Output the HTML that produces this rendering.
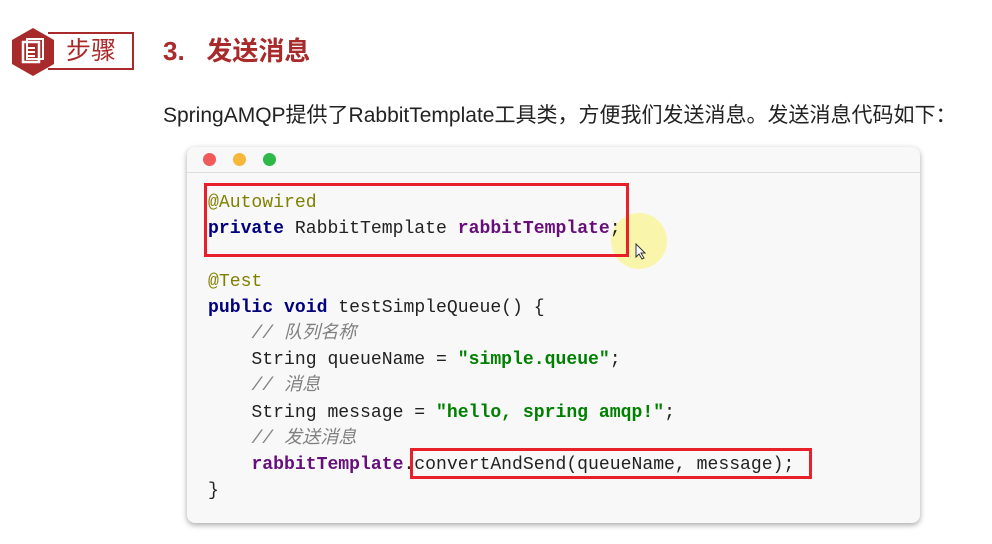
<!DOCTYPE html>
<html><head><meta charset="utf-8"><style>
*{margin:0;padding:0;box-sizing:border-box}
body{width:992px;height:544px;background:#fff;position:relative;overflow:hidden;font-family:"Liberation Sans","Noto Sans CJK SC",sans-serif}
.abs{position:absolute}
.code{font-family:"Liberation Mono","Noto Sans CJK SC",monospace;font-size:18.1px;line-height:26.2px;color:#222;white-space:pre}
.k{color:#000080;font-weight:bold}
.f{color:#660e7a;font-weight:bold}
.a{color:#808000}
.s{color:#008000;font-weight:bold}
.c{color:#808080;font-style:italic}
</style></head><body>
<svg class="abs" style="left:10px;top:27px" width="46" height="50" viewBox="0 0 46 50">
<polygon points="23,1 44,13 44,37 23,49 2,37 2,13" fill="#a82a2a"/>
<rect x="13" y="15" width="16" height="20" fill="none" stroke="#fff" stroke-width="2.5"/>
<rect x="17" y="12" width="16" height="20" fill="none" stroke="#fff" stroke-width="2"/>
<line x1="17" y1="21" x2="25" y2="21" stroke="#fff" stroke-width="2"/>
<line x1="17" y1="25" x2="25" y2="25" stroke="#fff" stroke-width="2"/>
<line x1="17" y1="29" x2="25" y2="29" stroke="#fff" stroke-width="2"/>
</svg>
<div class="abs" style="left:48px;top:32px;width:86px;height:38px;border:2px solid #a82a2a;border-left:none"></div>
<div class="abs" style="left:66px;top:35px;font-size:25px;color:#a82a2a;line-height:32px">步骤</div>
<div class="abs" style="left:163px;top:35px;font-size:26px;color:#a82a2a;font-weight:bold;line-height:32px">3.&nbsp;&nbsp;&nbsp;发送消息</div>
<div class="abs" style="left:163px;top:102px;font-size:21px;color:#222;line-height:28px">SpringAMQP提供了RabbitTemplate工具类，方便我们发送消息。发送消息代码如下：</div>
<div class="abs" style="left:187px;top:147px;width:733px;height:376px;background:#f8f8f8;border-radius:8px;box-shadow:0 2px 6px rgba(0,0,0,.35)">
<div style="height:26px;border-bottom:1px solid #ddd;position:relative">
<span class="abs" style="left:16px;top:6px;width:13px;height:13px;border-radius:50%;background:#ee5b5a"></span>
<span class="abs" style="left:46px;top:6px;width:13px;height:13px;border-radius:50%;background:#f6b73b"></span>
<span class="abs" style="left:76px;top:6px;width:13px;height:13px;border-radius:50%;background:#2cb947"></span>
</div>
</div>
<div class="abs" style="left:611px;top:213px;width:56px;height:56px;border-radius:50%;background:rgba(250,245,120,.6)"></div>
<div class="abs code" style="left:208px;top:190px"><span class="a">@Autowired</span>
<span class="k">private</span> RabbitTemplate <span class="f">rabbitTemplate</span>;

<span class="a">@Test</span>
<span class="k">public void</span> testSimpleQueue() {
    <span class="c">// 队列名称</span>
    String queueName = <span class="s">"simple.queue"</span>;
    <span class="c">// 消息</span>
    String message = <span class="s">"hello, spring amqp!"</span>;
    <span class="c">// 发送消息</span>
    <span class="f">rabbitTemplate</span>.convertAndSend(queueName, message);
}</div>
<div class="abs" style="left:204px;top:183px;width:425px;height:74px;border:3px solid #e8202a"></div>
<div class="abs" style="left:410px;top:448px;width:402px;height:31px;border:3px solid #e8202a"></div>
<svg class="abs" style="left:634px;top:243px" width="14" height="18"><path d="M2,1 L2,14 L5,11 L8,16 L10,15 L7,10 L11,10 Z" fill="#fff" stroke="#333" stroke-width="1"/></svg>
</body></html>
